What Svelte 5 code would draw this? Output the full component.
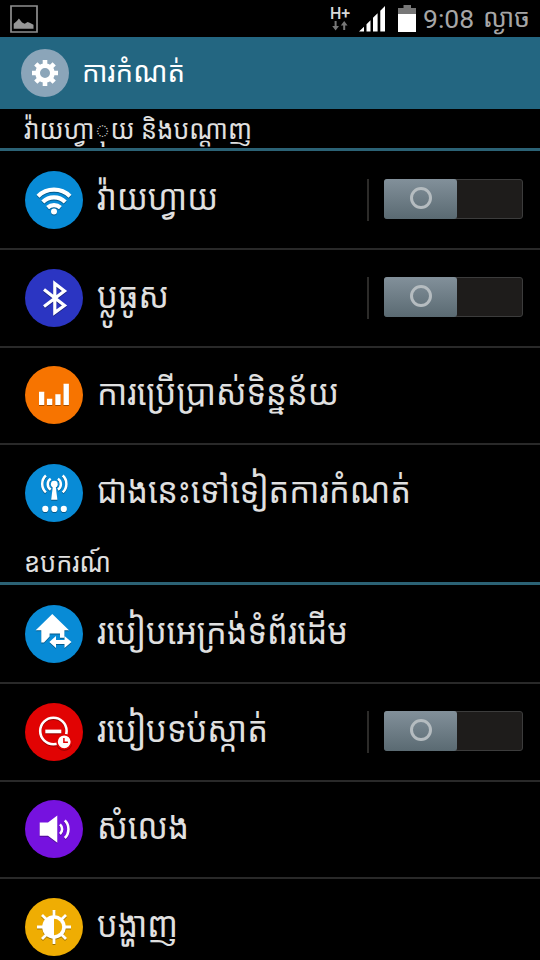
<script lang="ts">
  interface Item {
    icon: string;
    label: string;
    color: string;
    width: number;
    toggle?: boolean;
  }

  interface Section {
    title: string;
    width: number;
    items: Item[];
  }

  const sections: Section[] = [
    {
      title: 'វ៉ាយហ្វា\u25CCុយ និងបណ្តាញ',
      width: 228,
      items: [
        { icon: 'wifi', label: 'វ៉ាយហ្វាយ', color: '#088bd6', width: 121, toggle: true },
        { icon: 'bluetooth', label: 'ប្លូធូស', color: '#2b35c2', width: 72, toggle: true },
        { icon: 'data', label: 'ការប្រើប្រាស់ទិន្នន័យ', color: '#f77400', width: 242 },
        { icon: 'more', label: 'ជាងនេះទៅទៀតការកំណត់', color: '#088bd6', width: 314 },
      ],
    },
    {
      title: 'ឧបករណ៍',
      width: 87,
      items: [
        { icon: 'home', label: 'របៀបអេក្រង់ទំព័រដើម', color: '#088bd6', width: 251 },
        { icon: 'block', label: 'របៀបទប់ស្កាត់', color: '#e10303', width: 171, toggle: true },
        { icon: 'sound', label: 'សំលេង', color: '#7612df', width: 92 },
        { icon: 'display', label: 'បង្ហាញ', color: '#efad03', width: 81 },
      ],
    },
  ];
</script>

{#snippet line(text: string, width: number, size: number, y = 28)}
  <svg class="line" {width} height="36">
    <text x="0" {y} font-size={size} textLength={width} lengthAdjust="spacingAndGlyphs">{text}</text>
  </svg>
{/snippet}

{#snippet glyph(name: string, color: string)}
  <svg class="icon" viewBox="0 0 58 58">
    <circle cx="29" cy="29" r="29" fill={color} />
    <g class="art" fill="#fff" stroke="none">
      {#if name === 'wifi'}
        <g fill="none" stroke="#fff" stroke-width="4.2">
          <path d="M13 25.3a22.7 22.7 0 0 1 32 0" />
          <path d="M17.8 31a15.8 15.8 0 0 1 22.4 0" />
          <path d="M22.6 36.6a9.4 9.4 0 0 1 12.8 0" />
        </g>
        <circle cx="29" cy="40.6" r="3" />
      {:else if name === 'bluetooth'}
        <path d="M19 20.5 39.5 36.5 29.8 43.5V14.5L39.5 22 19 37.5" fill="none" stroke="#fff" stroke-width="3.2" />
      {:else if name === 'data'}
        <path d="M14 25.7h5.3V39H14zM21.9 32.7h5.4V39h-5.4zM30.3 28.3h5.3V39h-5.3zM38.5 17.7h5.4V39h-5.4z" />
      {:else if name === 'more'}
        <circle cx="29.3" cy="20.2" r="3.4" />
        <path d="M28 21h2.6l1.8 14.7h-6.2z" />
        <g fill="none" stroke="#fff" stroke-width="2.5">
          <path d="M25.7 25.6a6.4 6.4 0 0 1 0-10.8M32.9 25.6a6.4 6.4 0 0 0 0-10.8" />
          <path d="M20.9 28.3a11.4 11.4 0 0 1 0-16.8M37.7 28.3a11.4 11.4 0 0 0 0-16.8" />
        </g>
        <circle cx="20.3" cy="44.9" r="3.1" />
        <circle cx="29.4" cy="44.9" r="3.1" />
        <circle cx="38.8" cy="44.9" r="3.1" />
      {:else if name === 'home'}
        <path d="M27.3 9 44 25.2h-4.6v7.5H35v-4.2H24.6v3L19 37.6h-2.7V25.2h-5.6z" />
        <path d="m24.3 37 6.7-6v3.9h8.5V31l7 6-7 6v-3.9H31V43z" />
      {:else if name === 'block'}
        <circle cx="28.4" cy="28" r="13.2" fill="none" stroke="#fff" stroke-width="2.6" />
        <path d="M20.3 26.6h16v3.7h-16z" />
        <circle cx="39.2" cy="38.8" r="7.2" stroke={color} stroke-width="1.6" />
        <path d="M38.9 34.9v4.4h4" fill="none" stroke={color} stroke-width="1.5" />
      {:else if name === 'sound'}
        <path d="M14.7 22.5H23l9.3-7v27.2l-9.3-7h-8.3z" />
        <g fill="none" stroke="#fff" stroke-width="2.6">
          <path d="M35 24.4a6.5 6.5 0 0 1 0 9.6" />
          <path d="M39.8 20.4a12.4 12.4 0 0 1 0 17.6" />
        </g>
      {:else if name === 'display'}
        <g stroke="#fff" stroke-width="2.8">
          <path d="M29 12v34M12 29h34M17 17l24 24M41 17 17 41" />
        </g>
        <circle cx="29" cy="29" r="11.8" />
        <path d="M29 20.8a8.2 8.2 0 0 1 0 16.4z" fill={color} />
      {/if}
    </g>
  </svg>
{/snippet}

<div class="screen">
  <div class="status">
    <svg class="picture" viewBox="0 0 28 28">
      <path d="M1 1h26v26H1z" fill="none" stroke="#8e8e8e" stroke-width="1.7" />
      <path d="M3.7 23.7v-4.9l3.2-2.9 2-2.4 3.2 4 2.6 1.2 3-1.8 2.4 1.1 3.4 1.7v4z" fill="#969696" />
    </svg>
    <div class="network">
      <span>H+</span>
      <svg viewBox="0 0 16 10">
        <path d="M2.6 0h2v5H7L3.6 9.4.2 5h2.4zM11.2 9h2V4.4h2.4L12.2 0 8.8 4.4h2.4z" fill="#777" />
      </svg>
    </div>
    <svg class="signal" viewBox="0 0 27 27">
      <path d="M0 26.5 5 21.8v4.7zM7.5 19.3l4-4v11.2h-4zM14 12.8l4.6-4.5v18.2H14zM21.3 5.7 26 1v25.5h-4.7z" fill="#fff" />
    </svg>
    <svg class="battery" viewBox="0 0 18 28">
      <path d="M5.5 0h7.5v3h5v7H0V3h5.5z" fill="#777" />
      <path d="M0 9h18v18H0z" fill="#fff" />
    </svg>
    <span class="clock">9:08</span>
    {@render line('ល្ងាច', 47, 26, 26)}
  </div>

  <header>
    <svg class="gear" viewBox="0 0 48 48">
      <circle cx="24" cy="24" r="24" fill="#8ba5b9" />
      <g fill="none" stroke="#fff">
        <circle cx="24" cy="24" r="7.4" stroke-width="4.8" />
        <path d="M24 11v5M24 32v5M11 24h5M32 24h5M14.8 14.8l3.6 3.6M29.6 29.6l3.6 3.6M33.2 14.8l-3.6 3.6M18.4 29.6l-3.6 3.6" stroke-width="4.6" />
      </g>
    </svg>
    {@render line('ការកំណត់', 103, 29, 27)}
  </header>

  {#each sections as section}
    <section>
      <h2>{@render line(section.title, section.width, 27)}</h2>
      {#each section.items as item}
        <div class="row">
          {@render glyph(item.icon, item.color)}
          {@render line(item.label, item.width, 36)}
          {#if item.toggle}
            <div class="toggle">
              <div class="track">
                <div class="thumb"><i></i></div>
              </div>
            </div>
          {/if}
        </div>
      {/each}
    </section>
  {/each}
</div>

<style>
  :global(body) {
    background: #000;
  }

  .screen {
    width: 540px;
    height: 960px;
    overflow: hidden;
    background: #000;
    color: #e0e0e0;
    font-family: 'Noto Sans Khmer', 'Noto Sans', Roboto, sans-serif;
  }

  .line {
    flex: none;
    display: block;
    overflow: visible;
    fill: currentColor;
  }

  .status {
    display: flex;
    align-items: center;
    height: 37px;
    padding: 0 10px;
    box-sizing: border-box;
    color: #a6a6a6;
  }

  .picture {
    width: 28px;
    height: 28px;
  }

  .network {
    display: flex;
    flex-direction: column;
    align-items: center;
    width: 20px;
    margin-left: auto;
    color: #d8d8d8;
    font: 500 16px/14px Roboto, sans-serif;
  }

  .network svg {
    width: 16px;
    height: 10px;
  }

  .signal {
    width: 27px;
    height: 27px;
    margin-left: 9px;
  }

  .battery {
    width: 18px;
    height: 28px;
    margin: 1px 7px 0 12px;
  }

  .clock {
    width: 60px;
    font: 26.5px/36px Roboto, sans-serif;
    white-space: nowrap;
  }

  header {
    display: flex;
    align-items: center;
    gap: 13px;
    height: 72px;
    padding-left: 21px;
    background: #236681;
    color: #fff;
  }

  .gear {
    width: 48px;
    height: 48px;
  }

  h2 {
    display: flex;
    align-items: center;
    height: 42px;
    margin: 0 0 1.5px;
    padding-left: 24px;
    box-sizing: border-box;
    border-bottom: 3px solid #2b6275;
    font-weight: 400;
  }

  .row {
    display: flex;
    align-items: center;
    gap: 14px;
    height: 97.6px;
    padding: 0 17px 0 25px;
    box-sizing: border-box;
    border-bottom: 2px solid #292929;
  }

  .row:last-child {
    border-bottom-color: transparent;
  }

  .icon {
    flex: none;
    width: 58px;
    height: 58px;
  }

  .art {
    filter: drop-shadow(0 1px 0.5px rgba(0, 0, 0, 0.35));
  }

  .toggle {
    margin-left: auto;
    padding: 0 0 2px 15px;
    border-left: 2px solid #2c2b29;
  }

  .track {
    width: 139px;
    height: 40px;
    box-sizing: border-box;
    border: 1px solid #3c3c3c;
    border-radius: 3px;
    background: #1e1c1b;
  }

  .thumb {
    display: flex;
    align-items: center;
    justify-content: center;
    width: 73px;
    height: 40px;
    margin: -1px;
    border-radius: 3px;
    background: linear-gradient(#82909a, #5a6a72);
  }

  .thumb i {
    width: 16px;
    height: 16px;
    margin-bottom: 2px;
    border: 3px solid #b5bcc0;
    border-radius: 50%;
  }
</style>
